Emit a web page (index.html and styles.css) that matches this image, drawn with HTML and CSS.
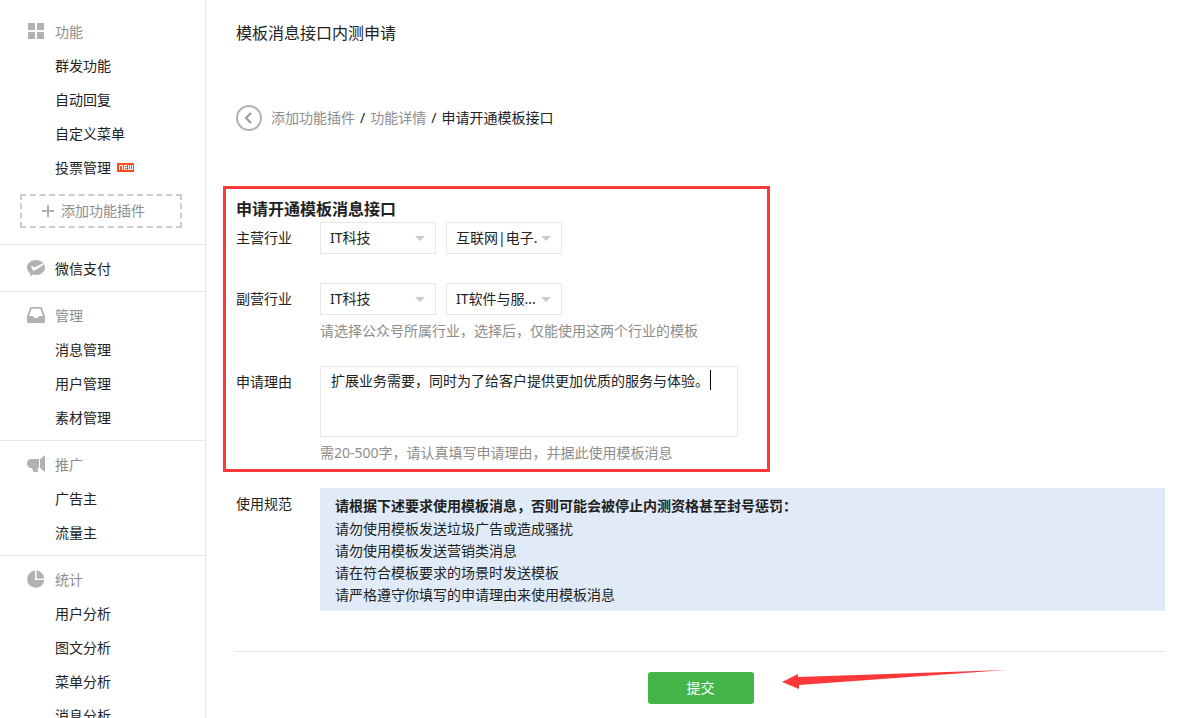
FILE: index.html
```html
<!DOCTYPE html>
<html lang="zh-CN">
<head>
  <meta charset="utf-8">
  <title>模板消息接口内测申请</title>
  <link rel="stylesheet" href="styles.css">
</head>
<body>
  <div class="layout">
    <nav class="sidebar">
      <div class="menu menu-first">
        <div class="menu-title">
          <svg class="menu-icon" viewBox="0 0 18 18"><path d="M1 1h7v7H1zM10 1h7v7h-7zM1 10h7v7H1zM10 10h7v7h-7z"/></svg>
          功能
        </div>
        <a class="menu-item" href="#">群发功能</a>
        <a class="menu-item" href="#">自动回复</a>
        <a class="menu-item" href="#">自定义菜单</a>
        <a class="menu-item" href="#">投票管理
          <svg class="badge-new" viewBox="0 0 17 9" role="img" aria-label="new"><path class="badge-bg" d="M0 0h17v9H0z"/><path class="badge-line" d="M2.500 7V2.500H5.500V7M10 2.500H7.500V6.500H10M7.500 4.500H10M11.500 2V6.500H15.500V2M13.500 2V6.500"/></svg>
        </a>
        <a class="add-plugin" href="#">
          <svg class="plus" viewBox="0 0 12 12"><path d="M5 0h2v5h5v2H7v5H5V7H0V5h5z"/></svg>
          添加功能插件
        </a>
      </div>
      <div class="menu">
        <a class="menu-item menu-single" href="#">
          <svg class="menu-icon" viewBox="0 0 18 18"><path fill-rule="evenodd" d="M9 1c5 0 9 3.300 9 7.500S14 16 9 16c-1 0-2-.1-2.900-.4L3 17.300v-3C1.200 12.900 0 10.900 0 8.500 0 4.300 4 1 9 1zM4 7.200L6.200 11.700l1.200.1 9.400-6.300-.9-1.200L7.900 8.200 7 8.300 4.800 6.800z"/></svg>
          微信支付
        </a>
      </div>
      <div class="menu">
        <div class="menu-title">
          <svg class="menu-icon" viewBox="0 0 18 18"><path fill-rule="evenodd" d="M3.500 1h11L18 10v7H0v-7zM4.700 2.700L2 10h4c.3 1.500 1.400 2 3 2s2.700-.5 3-2h4l-2.700-7.300z"/></svg>
          管理
        </div>
        <a class="menu-item" href="#">消息管理</a>
        <a class="menu-item" href="#">用户管理</a>
        <a class="menu-item" href="#">素材管理</a>
      </div>
      <div class="menu">
        <div class="menu-title">
          <svg class="menu-icon" viewBox="0 0 18 18"><path d="M4 4h8v9h-1.500l.5 4H6.500L5 13H4C1.500 13 0 11 0 8.500S1.500 4 4 4zM13 4.500L18 0v17l-5-4z"/></svg>
          推广
        </div>
        <a class="menu-item" href="#">广告主</a>
        <a class="menu-item" href="#">流量主</a>
      </div>
      <div class="menu">
        <div class="menu-title">
          <svg class="menu-icon" viewBox="0 0 18 18"><path d="M8 .6V10h9.300A8.600 8.600 0 1 1 8 .6zM9.500.6a8.500 8.500 0 0 1 7.800 7.900H9.500z"/></svg>
          统计
        </div>
        <a class="menu-item" href="#">用户分析</a>
        <a class="menu-item" href="#">图文分析</a>
        <a class="menu-item" href="#">菜单分析</a>
        <a class="menu-item" href="#">消息分析</a>
      </div>
    </nav>

    <main class="main">
      <h1 class="page-title">模板消息接口内测申请</h1>

      <div class="breadcrumb">
        <a class="back" href="#" aria-label="返回">
          <svg viewBox="0 0 26 26"><circle cx="13" cy="13" r="12"/><path d="M15 8l-5 5 5 5"/></svg>
        </a>
        <div class="crumbs">
          <a href="#">添加功能插件</a>
          <span>/</span>
          <a href="#">功能详情</a>
          <span>/</span>
          <span>申请开通模板接口</span>
        </div>
      </div>

      <form>
        <section class="highlight">
          <h2 class="form-title">申请开通模板消息接口</h2>
          <div class="row">
            <label class="row-label" for="mainIndustry">主营行业</label>
            <div class="selects">
              <div class="select"><select id="mainIndustry"><option>IT科技</option></select></div>
              <div class="select"><select aria-label="主营行业"><option>互联网|电子.</option></select></div>
            </div>
          </div>
          <div class="row row-second">
            <label class="row-label" for="subIndustry">副营行业</label>
            <div class="row-body">
              <div class="selects">
                <div class="select"><select id="subIndustry"><option>IT科技</option></select></div>
                <div class="select"><select aria-label="副营行业"><option>IT软件与服...</option></select></div>
              </div>
              <p class="hint">请选择公众号所属行业，选择后，仅能使用这两个行业的模板</p>
            </div>
          </div>
          <div class="row row-reason">
            <label class="row-label" for="reason">申请理由</label>
            <div class="row-body">
              <div class="reason-box">
                <textarea id="reason">扩展业务需要，同时为了给客户提供更加优质的服务与体验。</textarea>
                <span class="caret"></span>
              </div>
              <p class="hint">需20-500字，请认真填写申请理由，并据此使用模板消息</p>
            </div>
          </div>
        </section>

        <div class="row row-rules">
          <div class="row-label">使用规范</div>
          <div class="rules">
            <strong>请根据下述要求使用模板消息，否则可能会被停止内测资格甚至封号惩罚：</strong>
            <p>请勿使用模板发送垃圾广告或造成骚扰</p>
            <p>请勿使用模板发送营销类消息</p>
            <p>请在符合模板要求的场景时发送模板</p>
            <p>请严格遵守你填写的申请理由来使用模板消息</p>
          </div>
        </div>

        <div class="actions">
          <div class="submit-wrap">
            <button class="submit" type="submit">提交</button>
            <svg class="arrow" viewBox="0 0 224 20"><path d="M0 12L16 4v3L224 0 17 15v4z"/></svg>
          </div>
        </div>
      </form>
    </main>
  </div>
</body>
</html>
```

FILE: styles.css
```css
* {
  box-sizing: border-box;
}

body {
  margin: 0;
  background: #fff;
  color: #222;
  font-family: "Noto Sans", "Noto Sans CJK SC", sans-serif;
  font-size: 14px;
  line-height: 22px;
}

h1, h2, p {
  margin: 0;
}

a {
  color: inherit;
  text-decoration: none;
}

.layout {
  display: flex;
  height: 100vh;
  overflow: hidden;
}

/* sidebar */
.sidebar {
  flex: none;
  width: 206px;
  border-right: 1px solid #e7e7eb;
}

.menu {
  padding: 7px 0 5px;
  border-bottom: 1px solid #e7e7eb;
}

.menu-first {
  padding: 15px 0 16px;
}

.menu-title,
.menu-item {
  display: flex;
  align-items: center;
  height: 34px;
}

.menu-title {
  padding-left: 27px;
  gap: 10px;
  color: #8d8d8d;
}

.menu-item {
  padding-left: 55px;
  gap: 6px;
}

.menu-single {
  padding-left: 27px;
  gap: 10px;
}

.menu-icon {
  width: 18px;
  height: 18px;
  margin-bottom: 2px;
  fill: #b2b2b2;
}

.badge-new {
  width: 17px;
  height: 9px;
  margin-bottom: 1px;
}

.badge-bg {
  fill: #ff4e1a;
}

.badge-line {
  fill: none;
  stroke: #fff;
}

.add-plugin {
  display: flex;
  align-items: center;
  gap: 7px;
  height: 34px;
  margin: 9px 23px 0 20px;
  padding-left: 20px;
  border: 2px dashed #ccc;
  color: #8d8d8d;
}

.plus {
  width: 12px;
  height: 12px;
  fill: #b2b2b2;
}

/* content */
.main {
  flex: 1;
  min-width: 0;
  padding: 21px 22px 0 30px;
}

.page-title {
  font-size: 16px;
  font-weight: normal;
  line-height: 24px;
}

.breadcrumb {
  display: flex;
  align-items: center;
  gap: 9px;
  margin-top: 60px;
}

.breadcrumb a {
  color: #8d8d8d;
}

.crumbs {
  display: flex;
  gap: 5px;
}

.back,
.back svg {
  display: block;
  width: 26px;
  height: 26px;
}

.back svg {
  fill: none;
  stroke: #b2b2b2;
  stroke-width: 2;
}

.back path {
  stroke: #999;
}

.highlight {
  max-width: 547px;
  margin: 55px 0 0 -13px;
  padding: 8px 10px 5px;
  border: 3px solid #fc3939;
}

.form-title {
  margin-bottom: 1px;
  font-size: 16px;
  line-height: 24px;
}

.row {
  display: flex;
}

.row-second {
  margin-top: 29px;
}

.row-reason {
  margin-top: 24px;
}

.row-rules {
  margin-top: 16px;
}

.row-label {
  flex: none;
  width: 84px;
  line-height: 32px;
}

.row-body {
  flex: 1;
  max-width: 418px;
}

.selects {
  display: flex;
  gap: 10px;
}

.select {
  position: relative;
  width: 116px;
}

.select::after {
  content: "";
  position: absolute;
  top: 14px;
  right: 11px;
  border: 5px solid transparent;
  border-top-color: #ccc;
  border-bottom: 0;
  pointer-events: none;
}

.select select {
  display: block;
  width: 100%;
  height: 32px;
  padding: 0 20px 0 9px;
  border: 1px solid #e7e7eb;
  border-radius: 0;
  background: #fff;
  color: inherit;
  font: inherit;
  appearance: none;
}

.hint {
  margin-top: 5px;
  color: #8d8d8d;
  white-space: nowrap;
}

.reason-box {
  position: relative;
}

.reason-box textarea {
  display: block;
  width: 100%;
  height: 71px;
  padding: 3px 10px;
  border: 1px solid #e7e7eb;
  color: inherit;
  font: inherit;
  resize: none;
  outline: none;
}

.caret {
  position: absolute;
  top: 4px;
  left: 390px;
  width: 1px;
  height: 20px;
  background: #000;
}

.rules {
  flex: 1;
  padding: 6px 15px 5px;
  background: #e1ebf7;
}

.rules strong {
  display: block;
  line-height: 24px;
}

.actions {
  display: flex;
  justify-content: center;
  margin-top: 40px;
  padding-top: 20px;
  border-top: 1px solid #e7e7eb;
}

.submit-wrap {
  position: relative;
}

.submit {
  display: block;
  width: 106px;
  height: 32px;
  padding: 0;
  border: 0;
  border-radius: 3px;
  background: #44b549;
  color: #fff;
  font: inherit;
  cursor: pointer;
}

/* pointer to the submit button */
.arrow {
  position: absolute;
  top: -2px;
  left: 134px;
  width: 224px;
  height: 20px;
  fill: #fc3939;
}
```
